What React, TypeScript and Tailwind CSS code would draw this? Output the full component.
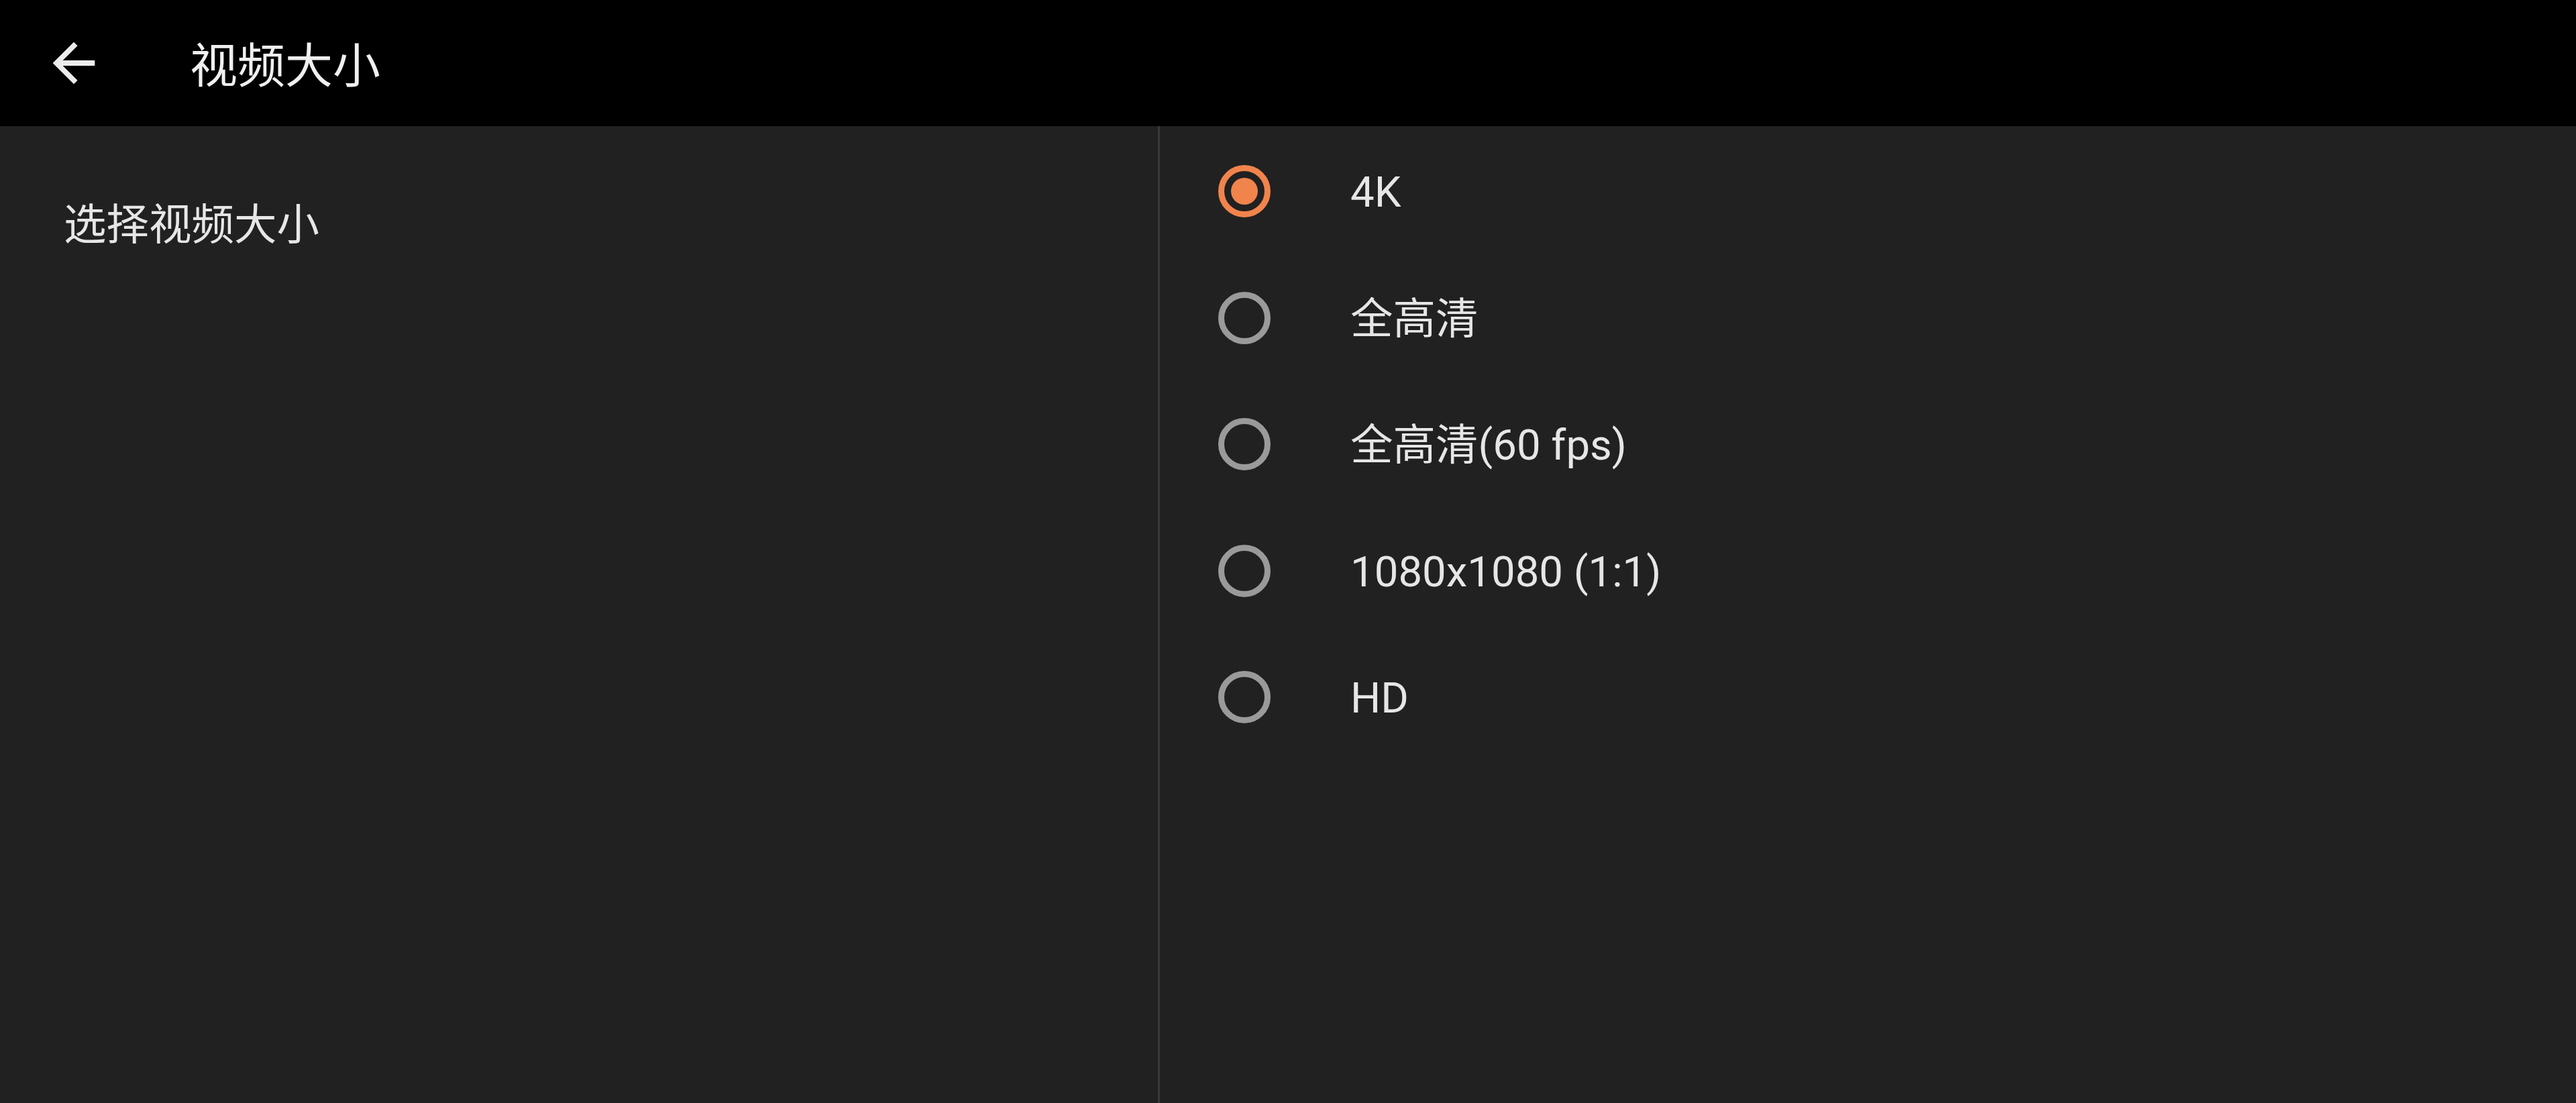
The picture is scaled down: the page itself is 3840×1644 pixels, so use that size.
const options = [
  { label: "4K", selected: true },
  { label: "全高清", selected: false },
  { label: "全高清(60 fps)", selected: false },
  { label: "1080x1080 (1:1)", selected: false },
  { label: "HD", selected: false },
];

function Radio({ selected }: { selected: boolean }) {
  return (
    <div
      className={
        selected
          ? "w-[78px] h-[78px] rounded-full border-[9px] border-[#f0844c] flex items-center justify-center shrink-0"
          : "w-[78px] h-[78px] rounded-full border-[9px] border-[#9a9a9a] shrink-0"
      }
    >
      {selected && <div className="w-[40px] h-[40px] rounded-full bg-[#f0844c]" />}
    </div>
  );
}

export default function App() {
  return (
    <div
      className="w-[3840px] h-[1644px] flex flex-col bg-[#212121] overflow-hidden"
      style={{ fontFamily: "Roboto, 'Noto Sans CJK SC', sans-serif" }}
    >
      {/* Toolbar */}
      <header className="h-[188px] bg-black flex items-center pl-[63px] shrink-0">
        <svg width="94" height="94" viewBox="0 0 24 24" className="shrink-0">
          <path fill="#ececec" d="M20 11H7.83l5.59-5.59L12 4l-8 8 8 8 1.41-1.41L7.83 13H20v-2z" />
        </svg>
        <h1 className="ml-[126px] mt-[8px] text-[71px] leading-none text-[#f0f0f0] font-normal">视频大小</h1>
      </header>

      <div className="flex flex-1">
        {/* Left pane */}
        <div className="w-[1726px] pl-[95px] pt-[111px]">
          <div className="text-[63.5px] leading-[74px] text-[#e6e6e6]">选择视频大小</div>
        </div>

        <div className="w-[3px] bg-[#383838]" />

        {/* Right pane */}
        <div className="flex-1 flex flex-col pt-[3px]">
          {options.map((o) => (
            <div key={o.label} className="h-[188.5px] flex items-center pl-[87px]">
              <Radio selected={o.selected} />
              <span className="ml-[119px] mt-[3px] text-[63.5px] text-[#e6e6e6]">{o.label}</span>
            </div>
          ))}
        </div>
      </div>
    </div>
  );
}
